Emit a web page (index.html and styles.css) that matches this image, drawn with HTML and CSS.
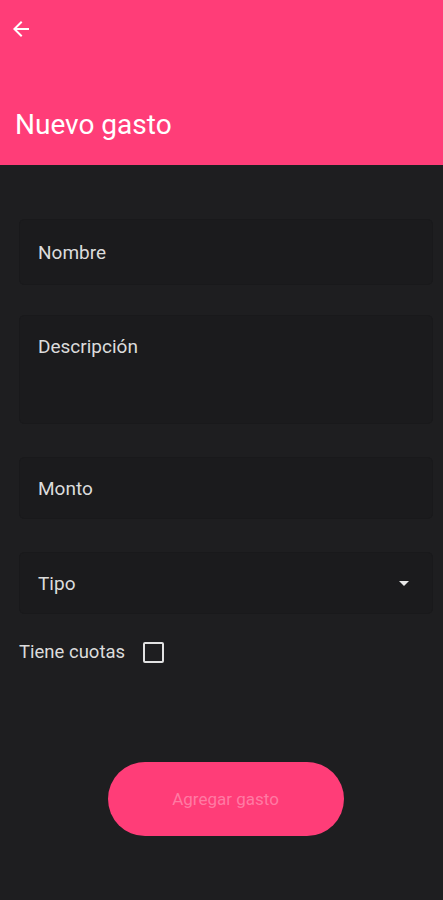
FILE: index.html
```html
<!DOCTYPE html>
<html lang="es">
<head>
  <meta charset="UTF-8" />
  <title>Nuevo gasto</title>
  <link rel="stylesheet" href="styles.css">
</head>
<body>
  <div id="header">
    <button class="back" aria-label="Volver">
      <svg width="24" height="24" viewBox="0 0 24 24">
        <path d="M20 11H7.83l5.59-5.59L12 4l-8 8 8 8 1.41-1.41L7.83 13H20v-2z" fill="#fff"/>
      </svg>
    </button>
    <h1>Nuevo gasto</h1>
  </div>

  <div id="form">
    <div class="field">Nombre</div>
    <div class="field tall">Descripción</div>
    <div class="field short">Monto</div>
    <div class="field select">
      <span>Tipo</span>
      <svg width="24" height="24" viewBox="0 0 24 24"><path d="M7 10l5 5 5-5z" fill="#e8e8e8"/></svg>
    </div>

    <label class="check">
      Tiene cuotas
      <span class="box"></span>
    </label>

    <div class="actions">
      <button class="submit" disabled>Agregar gasto</button>
    </div>
  </div>
</body>
</html>
```

FILE: styles.css
```css
body {
  margin: 0;
  font-family: Roboto, "Noto Sans", sans-serif;
  background-color: #1e1e20;
  color: #dcdcdc;
}

#header {
  background-color: #ff3d78;
  height: 165px;
  box-sizing: border-box;
  padding: 17px 15px 0;
  display: flex;
  flex-direction: column;
}

.back {
  background: none;
  border: none;
  padding: 0;
  margin-left: -6px;
  width: 24px;
  height: 24px;
  cursor: pointer;
}

#header h1 {
  margin: 67px 0 0;
  font-size: 28px;
  font-weight: 400;
  color: #fff;
}

#form {
  padding: 54px 10px 0 19px;
  display: flex;
  flex-direction: column;
}

.field {
  height: 66px;
  box-sizing: border-box;
  padding: 21px 18px 0;
  background-color: #1b1b1d;
  border: 1px solid #19191b;
  border-radius: 5px;
  font-size: 19px;
  margin-bottom: 30px;
}

.field.tall {
  height: 109px;
  padding-top: 19px;
  margin-bottom: 33px;
}

.field.short {
  height: 62px;
  padding-top: 19px;
  margin-bottom: 33px;
}

.field.select {
  display: flex;
  justify-content: space-between;
  align-items: center;
  padding: 0 16px 0 18px;
  height: 62px;
  margin-bottom: 27px;
}

.check {
  display: flex;
  align-items: center;
  gap: 18px;
  font-size: 18.5px;
  color: #dcdcdc;
}

.box {
  width: 17px;
  height: 17px;
  border: 2px solid #e2e2e2;
  border-radius: 2px;
}

.actions {
  display: flex;
  justify-content: center;
  padding-right: 1px;
  margin-top: 99px;
}

.submit {
  width: 236px;
  height: 74px;
  border: none;
  border-radius: 37px;
  background-color: #ff3d78;
  color: #ff7aa3;
  font-family: Roboto, "Noto Sans", sans-serif;
  font-size: 17px;
}
```
